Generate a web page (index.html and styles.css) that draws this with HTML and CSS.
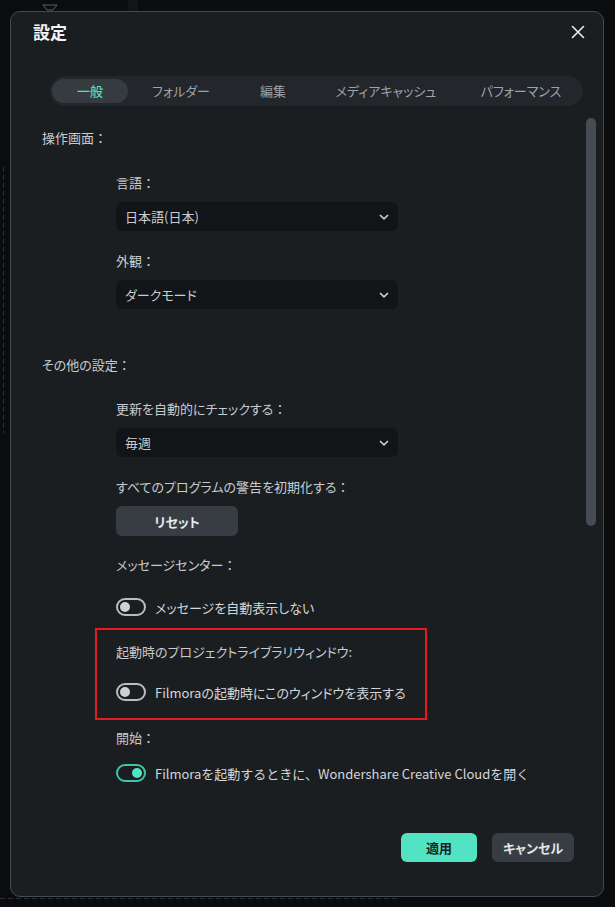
FILE: index.html
```html
<!DOCTYPE html>
<html lang="ja">
<head>
<meta charset="utf-8">
<title>設定</title>
<link rel="stylesheet" href="styles.css">
</head>
<body>
<div class="app-bg">
  <div class="bg-strip"></div>
  <svg class="bg-tri" width="16" height="7" viewBox="0 0 16 7"><path d="M1 1 H15 L11 6 H5 Z" fill="none" stroke="#5d636a" stroke-width="1"/></svg>
  <div class="bg-dash-v"></div>
  <div class="bg-dash-h"></div>
</div>

<div class="dialog">
  <div class="dlg-header">
    <div class="dlg-title">設定</div>
    <svg class="close" width="14" height="14" viewBox="0 0 14 14"><path d="M1.5 1.5 L12.5 12.5 M12.5 1.5 L1.5 12.5" stroke="#e9ebed" stroke-width="1.6" stroke-linecap="round"/></svg>
  </div>

  <div class="tabs">
    <div class="tab t-general active">一般</div>
    <div class="tab t-folder">フォルダー</div>
    <div class="tab t-edit">編集</div>
    <div class="tab t-cache">メディアキャッシュ</div>
    <div class="tab t-perf">パフォーマンス</div>
  </div>

  <div class="scrollbar"></div>

  <div class="content">
    <div class="section-label">操作画面<span class="colon">：</span></div>
    <div class="sub">
      <div class="label l-lang">言語<span class="colon">：</span></div>
      <div class="select"><span>日本語(日本)</span><svg class="chev" width="10" height="6" viewBox="0 0 10 6"><path d="M1 1 L5 4.8 L9 1" fill="none" stroke="#cdd1d5" stroke-width="1.6"/></svg></div>
      <div class="label l-look">外観<span class="colon">：</span></div>
      <div class="select"><span>ダークモード</span><svg class="chev" width="10" height="6" viewBox="0 0 10 6"><path d="M1 1 L5 4.8 L9 1" fill="none" stroke="#cdd1d5" stroke-width="1.6"/></svg></div>
    </div>

    <div class="section-label s-other">その他の設定<span class="colon">：</span></div>
    <div class="sub">
      <div class="label l-update">更新を自動的にチェックする<span class="colon">：</span></div>
      <div class="select"><span>毎週</span><svg class="chev" width="10" height="6" viewBox="0 0 10 6"><path d="M1 1 L5 4.8 L9 1" fill="none" stroke="#cdd1d5" stroke-width="1.6"/></svg></div>
      <div class="label l-reset">すべてのプログラムの警告を初期化する<span class="colon">：</span></div>
      <div class="btn-reset">リセット</div>
      <div class="label l-msg">メッセージセンター<span class="colon">：</span></div>
      <div class="toggle-row r-msg"><span class="toggle"><span class="knob"></span></span><span>メッセージを自動表示しない</span></div>

      <div class="highlight">
        <div class="label">起動時のプロジェクトライブラリウィンドウ:</div>
        <div class="toggle-row r-lib"><span class="toggle"><span class="knob"></span></span><span>Filmoraの起動時にこのウィンドウを表示する</span></div>
      </div>

      <div class="label l-start">開始<span class="colon">：</span></div>
      <div class="toggle-row r-start"><span class="toggle on"><span class="knob"></span></span><span>Filmoraを起動するときに、Wondershare Creative Cloudを開く</span></div>
    </div>
  </div>

  <div class="footer">
    <div class="btn btn-apply">適用</div>
    <div class="btn btn-cancel">キャンセル</div>
  </div>
</div>
</body>
</html>
```

FILE: styles.css
```css
* { box-sizing: border-box; }
html, body {
  margin: 0;
  padding: 0;
  width: 615px;
  height: 907px;
  overflow: hidden;
  background: #0a0c0e;
  font-family: "Noto Sans CJK JP", "Noto Sans", sans-serif;
  font-feature-settings: "palt";
  color: #c7cbcf;
  font-size: 13px;
}

.app-bg { position: absolute; inset: 0; }
.bg-strip { position: absolute; left: 128px; top: 0; width: 10px; height: 11px; background: #121417; }
.bg-tri { position: absolute; left: 42px; top: 4px; }
.bg-dash-v {
  position: absolute; left: 3px; top: 167px; width: 1px; height: 266px;
  background: repeating-linear-gradient(to bottom, #2c3035 0 5px, transparent 5px 8px);
}
.bg-dash-h {
  position: absolute; left: 0; top: 898px; width: 400px; height: 1px;
  background: repeating-linear-gradient(to right, #2c3035 0 5px, transparent 5px 8px);
}

.dialog {
  position: absolute;
  left: 10px;
  top: 11px;
  width: 594px;
  height: 886px;
  background: #1b1e21;
  border: 1px solid #434a51;
  border-radius: 10px;
  display: flex;
  flex-direction: column;
}

.dlg-header {
  height: 40px;
  padding: 0 18px 0 22px;
  display: flex;
  align-items: center;
  justify-content: space-between;
}
.dlg-title {
  font-size: 17px;
  font-weight: 700;
  color: #f2f3f5;
  line-height: 24px;
}
.close { display: block; }

.tabs {
  margin: 24px 0 0 39px;
  width: 533px;
  height: 30px;
  padding: 3px 0 3px 2px;
  background: #23272b;
  border-radius: 15px;
  display: flex;
}
.tab {
  flex: none;
  height: 24px;
  line-height: 24px;
  text-align: center;
  color: #9ea3a9;
  font-size: 13px;
  border-radius: 12px;
  white-space: nowrap;
}
.t-general { width: 76px; }
.t-folder { width: 106px; }
.t-edit { width: 78px; }
.t-cache { width: 148px; }
.t-perf { width: 122px; }
.tab.active {
  background: #363b40;
  color: #4fdfbb;
  font-weight: 500;
}

.scrollbar {
  position: absolute;
  left: 575px;
  top: 106px;
  width: 10px;
  height: 408px;
  background: #454c54;
  border-radius: 5px;
}

.content {
  padding-top: 22px;
}
.colon { font-feature-settings: normal; }
.section-label {
  padding-left: 31px;
  line-height: 20px;
  height: 20px;
}
.s-other { margin-top: 46px; }

.sub {
  padding-left: 105px;
  display: flex;
  flex-direction: column;
  align-items: flex-start;
}
.label { line-height: 20px; height: 20px; white-space: nowrap; }
.l-lang { margin-top: 25px; }
.l-look { margin-top: 20px; }
.l-update { margin-top: 24px; }
.l-reset { margin-top: 20px; }
.l-msg { margin-top: 19px; }
.l-start { margin-top: 8px; }

.select {
  margin-top: 9px;
  width: 282px;
  height: 29px;
  background: #121518;
  border-radius: 6px;
  padding: 0 9px 0 9px;
  display: flex;
  align-items: center;
  justify-content: space-between;
  color: #c9cdd1;
}
.chev { display: block; }

.btn-reset {
  margin-top: 9px;
  width: 122px;
  height: 30px;
  border-radius: 6px;
  background: #383d43;
  color: #e6e8ea;
  font-weight: 700;
  display: flex;
  align-items: center;
  justify-content: center;
}

.toggle-row {
  height: 20px;
  display: flex;
  align-items: center;
  gap: 9px;
  white-space: nowrap;
  color: #d3d6da;
}
.r-msg { margin-top: 22px; }
.r-lib { margin-top: 20px; }
.r-start { margin-top: 15px; font-feature-settings: normal; }

.toggle {
  width: 30px;
  height: 18px;
  border: 2px solid #b9bdc2;
  border-radius: 9px;
  display: flex;
  align-items: center;
  padding: 0 2px;
}
.knob {
  width: 10px;
  height: 10px;
  border-radius: 50%;
  background: #cdd1d5;
}
.toggle.on {
  border-color: #3fc6a4;
  justify-content: flex-end;
}
.toggle.on .knob { background: #52e3c2; }

.highlight {
  margin-top: 11px;
  margin-left: -21px;
  width: 332px;
  height: 92px;
  border: 2px solid #e31b23;
  padding: 12px 0 0 19px;
}

.footer {
  margin-top: auto;
  padding: 0 29px 34px 0;
  display: flex;
  justify-content: flex-end;
  gap: 15px;
}
.btn {
  height: 29px;
  border-radius: 6px;
  font-weight: 700;
  display: flex;
  align-items: center;
  justify-content: center;
}
.btn-apply { width: 76px; background: #52e3c2; color: #1b1e21; }
.btn-cancel { width: 82px; background: #383d43; color: #e3e5e8; }
```
